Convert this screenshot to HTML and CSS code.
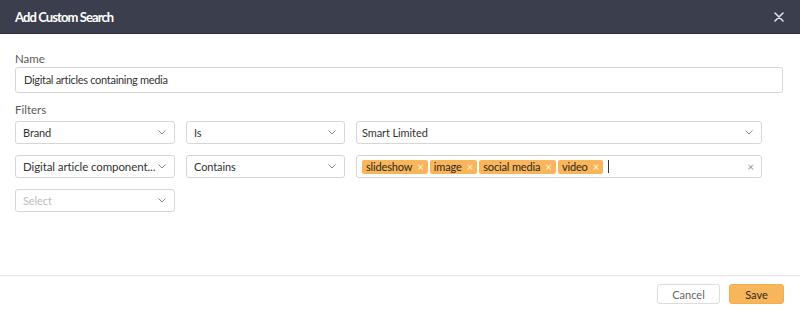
FILE: index.html
```html
<!DOCTYPE html>
<html>
<head>
<meta charset="utf-8">
<link rel="stylesheet" href="styles.css">
</head>
<body>
<div class="modal">
  <div class="header">
    <span class="title">Add Custom Search</span>
    <svg class="close" width="10" height="10" viewBox="0 0 10 10"><path d="M1 1L9 9M9 1L1 9" stroke="#e6e8ee" stroke-width="1.5" stroke-linecap="round"/></svg>
  </div>
  <div class="main">
    <div class="label">Name</div>
    <div class="input">Digital articles containing media</div>
    <div class="label filters-label">Filters</div>
    <div class="filters">
      <div class="select"><span>Brand</span><svg class="chev" width="8" height="5" viewBox="0 0 8 5"><path d="M0.5 0.5L4 4L7.5 0.5" fill="none" stroke="#888" stroke-width="1"/></svg></div>
      <div class="select"><span>Is</span><svg class="chev" width="8" height="5" viewBox="0 0 8 5"><path d="M0.5 0.5L4 4L7.5 0.5" fill="none" stroke="#888" stroke-width="1"/></svg></div>
      <div class="select wide"><span>Smart Limited</span><svg class="chev" width="8" height="5" viewBox="0 0 8 5"><path d="M0.5 0.5L4 4L7.5 0.5" fill="none" stroke="#888" stroke-width="1"/></svg></div>

      <div class="select"><span class="long">Digital article component...</span><svg class="chev" width="8" height="5" viewBox="0 0 8 5"><path d="M0.5 0.5L4 4L7.5 0.5" fill="none" stroke="#888" stroke-width="1"/></svg></div>
      <div class="select"><span>Contains</span><svg class="chev" width="8" height="5" viewBox="0 0 8 5"><path d="M0.5 0.5L4 4L7.5 0.5" fill="none" stroke="#888" stroke-width="1"/></svg></div>
      <div class="select wide tags">
        <span class="tag">slideshow<span class="tx">×</span></span>
        <span class="tag">image<span class="tx">×</span></span>
        <span class="tag">social media<span class="tx">×</span></span>
        <span class="tag">video<span class="tx">×</span></span>
        <span class="cursor"></span>
        <span class="clear">×</span>
      </div>

      <div class="select placeholder"><span>Select</span><svg class="chev" width="8" height="5" viewBox="0 0 8 5"><path d="M0.5 0.5L4 4L7.5 0.5" fill="none" stroke="#888" stroke-width="1"/></svg></div>
    </div>
  </div>
  <div class="footer">
    <button class="btn cancel">Cancel</button>
    <button class="btn save">Save</button>
  </div>
</div>
</body>
</html>
```

FILE: styles.css
```css
html, body {
  margin: 0;
  padding: 0;
  background: #fff;
}
body {
  font-family: Lato, "Open Sans", sans-serif;
  color: #333;
}
.modal {
  width: 800px;
  height: 311px;
  display: flex;
  flex-direction: column;
}
.header {
  height: 34px;
  background: #3b3f4d;
  border-bottom: 1px solid #2e323d;
  box-sizing: border-box;
  display: flex;
  align-items: center;
  justify-content: space-between;
  padding: 0 16px 0 15px;
}
.title {
  color: #fff;
  font-weight: 700;
  font-size: 13px;
  letter-spacing: -0.9px;
}
.close {
  display: block;
}
.main {
  height: 241px;
  box-sizing: border-box;
  padding: 17px 17px 0 15px;
}
.label {
  font-size: 11.5px;
  line-height: 16px;
  color: #5a5a5a;
}
.filters-label {
  margin-top: 9px;
  margin-bottom: 3px;
}
.input {
  height: 26px;
  box-sizing: border-box;
  border: 1px solid #d6d6d6;
  border-radius: 3px;
  font-size: 11px;
  letter-spacing: -0.3px;
  line-height: 24px;
  padding: 0 8px;
  color: #333;
}
.filters {
  display: grid;
  grid-template-columns: 160px 159px 406px;
  column-gap: 11px;
  row-gap: 11px;
}
.select {
  height: 23px;
  box-sizing: border-box;
  border: 1px solid #d6d6d6;
  border-radius: 3px;
  font-size: 11px;
  letter-spacing: -0.1px;
  display: flex;
  align-items: center;
  justify-content: space-between;
  padding: 0 8px 0 7px;
  color: #333;
  white-space: nowrap;
}
.select .long {
  font-size: 11.5px;
}
.select.wide {
  padding-left: 5px;
}
.select.placeholder span {
  color: #bdbdbd;
}
.chev {
  display: block;
  flex: none;
}
.tags {
  justify-content: flex-start;
  gap: 2px;
  padding-left: 4px;
  padding-right: 7px;
}
.tag {
  background: #f9b55a;
  border-radius: 2px;
  height: 14px;
  line-height: 14px;
  font-size: 11px;
  letter-spacing: -0.15px;
  color: #2b2822;
  padding: 0 4px 0 4px;
  display: inline-flex;
  align-items: center;
}
.tx {
  color: #fff1dc;
  font-size: 11.5px;
  margin-left: 5px;
}
.cursor {
  width: 1px;
  height: 13px;
  background: #333;
  margin-left: 3px;
}
.clear {
  margin-left: auto;
  color: #999;
  font-size: 12px;
}
.footer {
  flex: 1;
  border-top: 1px solid #e6e6e6;
  display: flex;
  justify-content: flex-end;
  align-items: flex-start;
  gap: 9px;
  padding: 8px 16px 0 0;
}
.btn {
  height: 20px;
  box-sizing: border-box;
  font-family: Lato, "Open Sans", sans-serif;
  font-size: 11px;
  border-radius: 3px;
  padding: 0;
  cursor: pointer;
}
.cancel {
  width: 63px;
  background: #fff;
  border: 1px solid #dcdcdc;
  color: #666;
}
.save {
  width: 55px;
  background: #f9b55a;
  border: 1px solid #f2ad4f;
  color: #2b2822;
}
```
